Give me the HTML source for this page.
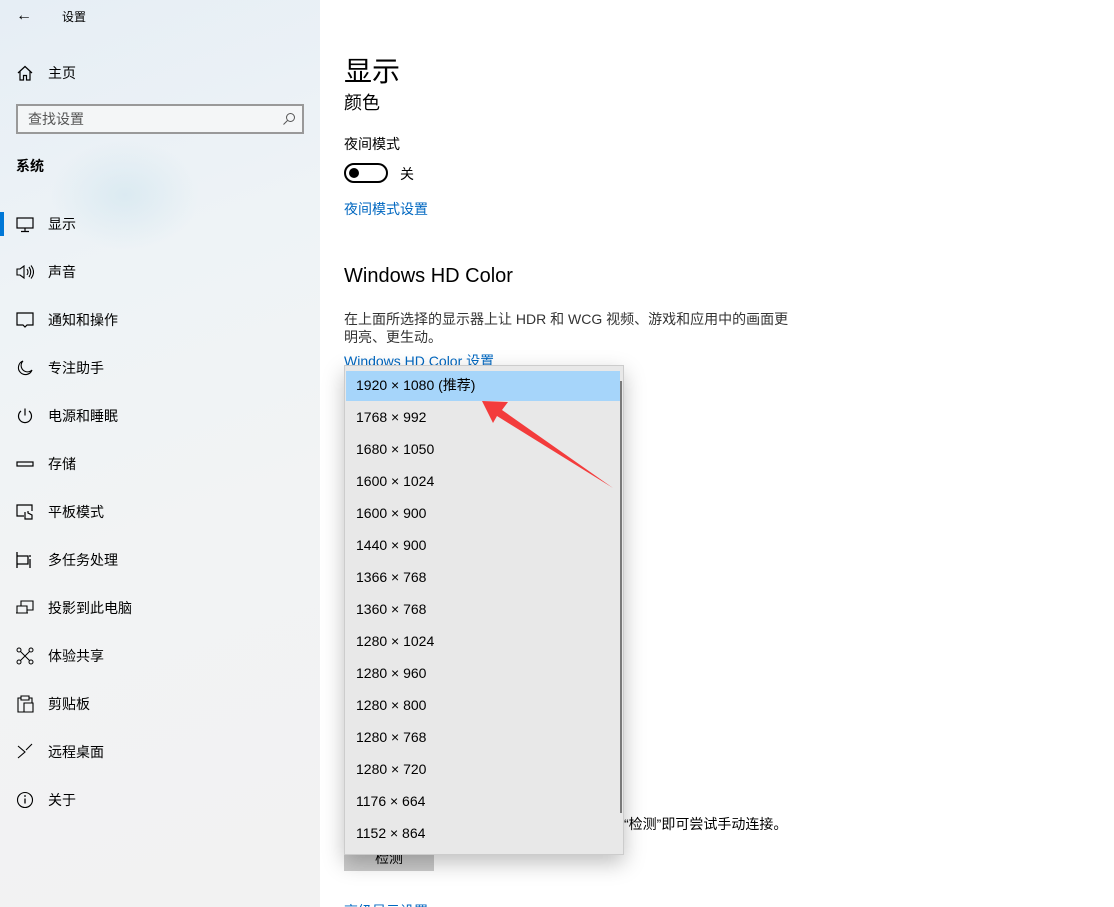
<!DOCTYPE html>
<html><head><meta charset="utf-8"><style>
*{margin:0;padding:0;box-sizing:border-box}
html,body{width:1114px;height:907px;overflow:hidden}
body{background:#fff;font-family:"Liberation Sans","Noto Sans CJK SC",sans-serif;color:#000;position:relative}
.side{position:absolute;left:0;top:0;width:320px;height:907px;background:linear-gradient(160deg,#e6eef5 0%,#eef3f6 30%,#f2f3f4 60%,#f2f2f2 100%)}
.glow{position:absolute;left:50px;top:140px;width:150px;height:110px;border-radius:50%;background:radial-gradient(ellipse,rgba(205,228,238,.55),rgba(220,236,242,0) 70%)}
.t{position:absolute;font-size:14px;line-height:20px;white-space:nowrap}
.ic{position:absolute;left:16px;width:18px;height:18px}
.item{position:absolute;left:48px;font-size:14px;line-height:20px}
.dd{position:absolute;left:344px;top:365px;width:280px;height:490px;background:#e8e8e8;border:1px solid #ccc;box-shadow:0 8px 20px rgba(0,0,0,.25)}
.op{position:absolute;left:11px;font-size:14px;line-height:20px}
.link{color:#0067c0}
</style></head><body>
<div class="side"><div class="glow"></div>
<div class="t" style="left:16px;top:6px;font-size:16px">←</div>
<div class="t" style="left:62px;top:7px;font-size:12px">设置</div>
<svg class="ic" style="top:64px" viewBox="0 0 18 18"><path d="M2 9L9 2.5 16 9M4 7.5V16h3.5v-4.5h3V16H14V7.5" fill="none" stroke="#000" stroke-width="1.2"/></svg>
<div class="item" style="top:63px">主页</div>
<div style="position:absolute;left:16px;top:104px;width:288px;height:30px;border:2px solid #999;background:#f4f6f7"></div>
<div class="t" style="left:28px;top:109px;color:#555">查找设置</div>
<svg style="position:absolute;left:282px;top:112px" width="14" height="14" viewBox="0 0 14 14"><circle cx="8.5" cy="5.5" r="4" fill="none" stroke="#555"/><path d="M5.5 8.5L1.5 12.5" stroke="#555"/></svg>
<div class="t" style="left:16px;top:156px;font-weight:bold">系统</div>
<div style="position:absolute;left:0;top:212px;width:4px;height:24px;background:#0078d7"></div>
<svg class="ic" style="top:216px" viewBox="0 0 18 18"><rect x="1" y="2" width="16" height="10" fill="none" stroke="#000" stroke-width="1.2"/><path d="M9 12v3M5 15.5h8" stroke="#000" stroke-width="1.2"/></svg>
<div class="item" style="top:214px">显示</div>
<svg class="ic" style="top:263px" viewBox="0 0 18 18"><path d="M1 6h3l4-3v12l-4-3H1z M11 6q2 3 0 6M13 4q3.5 5 0 10M15 2.5q5 6.5 0 13" fill="none" stroke="#000" stroke-width="1.1"/></svg>
<div class="item" style="top:262px">声音</div>
<svg class="ic" style="top:311px" viewBox="0 0 18 18"><path d="M1 2h16v12h-6l-2 2-2-2H1z" fill="none" stroke="#000" stroke-width="1.2"/></svg>
<div class="item" style="top:310px">通知和操作</div>
<svg class="ic" style="top:359px" viewBox="0 0 18 18"><path d="M7 2a7 7 0 1 0 9 9A6 6 0 0 1 7 2z" fill="none" stroke="#000" stroke-width="1.1"/></svg>
<div class="item" style="top:358px">专注助手</div>
<svg class="ic" style="top:407px" viewBox="0 0 18 18"><path d="M9 1.5v7M5 4a6.5 6.5 0 1 0 8 0" fill="none" stroke="#000" stroke-width="1.2"/></svg>
<div class="item" style="top:406px">电源和睡眠</div>
<svg class="ic" style="top:455px" viewBox="0 0 18 18"><rect x="1" y="7" width="16" height="4" fill="none" stroke="#000" stroke-width="1.2"/></svg>
<div class="item" style="top:454px">存储</div>
<svg class="ic" style="top:503px" viewBox="0 0 18 18"><path d="M8 13H1V2h15v6M9 9v7h7v-4l-4-2V8" fill="none" stroke="#000" stroke-width="1.2"/></svg>
<div class="item" style="top:502px">平板模式</div>
<svg class="ic" style="top:551px" viewBox="0 0 18 18"><path d="M1 1v16M1 5h11v8H1M14 4v2M14 8v9" fill="none" stroke="#000" stroke-width="1.3"/></svg>
<div class="item" style="top:550px">多任务处理</div>
<svg class="ic" style="top:599px" viewBox="0 0 18 18"><path d="M5 7V2h12v9h-6M1 7h10v7H1zM0 14h12" fill="none" stroke="#000" stroke-width="1.1"/></svg>
<div class="item" style="top:598px">投影到此电脑</div>
<svg class="ic" style="top:647px" viewBox="0 0 18 18"><circle cx="3" cy="3" r="2" fill="none" stroke="#000"/><circle cx="15" cy="3" r="2" fill="none" stroke="#000"/><circle cx="3" cy="15" r="2" fill="none" stroke="#000"/><circle cx="15" cy="15" r="2" fill="none" stroke="#000"/><path d="M4.5 4.5l9 9M13.5 4.5l-9 9" stroke="#000"/></svg>
<div class="item" style="top:646px">体验共享</div>
<svg class="ic" style="top:695px" viewBox="0 0 18 18"><path d="M5 3H2v14h6M13 3h3v5M5 1h8v4H5zM8 8h9v9H8z" fill="none" stroke="#000" stroke-width="1.1"/></svg>
<div class="item" style="top:694px">剪贴板</div>
<svg class="ic" style="top:743px" viewBox="0 0 18 18"><path d="M2 3l7 6-7 6M16 1l-6 6" fill="none" stroke="#000" stroke-width="1.1"/></svg>
<div class="item" style="top:742px">远程桌面</div>
<svg class="ic" style="top:791px" viewBox="0 0 18 18"><circle cx="9" cy="9" r="7.5" fill="none" stroke="#000" stroke-width="1.1"/><path d="M9 7.5v5" stroke="#000" stroke-width="1.3"/><circle cx="9" cy="5" r=".9"/></svg>
<div class="item" style="top:790px">关于</div>
</div>

<div class="t" style="left:344px;top:52px;font-size:28px;line-height:40px">显示</div>
<div class="t" style="left:344px;top:91px;font-size:18px;line-height:24px">颜色</div>
<div class="t" style="left:344px;top:134px">夜间模式</div>
<div style="position:absolute;left:344px;top:163px;width:44px;height:20px;border:2px solid #000;border-radius:10px"></div>
<div style="position:absolute;left:349px;top:168px;width:10px;height:10px;border-radius:50%;background:#000"></div>
<div class="t" style="left:400px;top:164px">关</div>
<div class="t link" style="left:344px;top:199px">夜间模式设置</div>
<div class="t" style="left:344px;top:263px;font-size:20px;line-height:26px">Windows HD Color</div>
<div class="t" style="left:344px;top:309px;color:#333">在上面所选择的显示器上让 HDR 和 WCG 视频、游戏和应用中的画面更</div>
<div class="t" style="left:344px;top:327px;color:#333">明亮、更生动。</div>
<div class="t link" style="left:344px;top:351px">Windows HD Color 设置</div>
<div class="t" style="left:624px;top:814px">“检测”即可尝试手动连接。</div>
<div style="position:absolute;left:344px;top:845px;width:90px;height:26px;background:#ccc"></div>
<div class="t" style="left:375px;top:848px">检测</div>
<div class="t link" style="left:344px;top:901px">高级显示设置</div>

<div class="dd">
<div style="position:absolute;left:1px;top:5px;width:274px;height:30px;background:#a6d5fa"></div>
<div style="position:absolute;left:275px;top:15px;width:2px;height:432px;background:#7a7a7a"></div>
<div class="op" style="top:9px">1920 × 1080 (推荐)</div>
<div class="op" style="top:41px">1768 × 992</div>
<div class="op" style="top:73px">1680 × 1050</div>
<div class="op" style="top:105px">1600 × 1024</div>
<div class="op" style="top:137px">1600 × 900</div>
<div class="op" style="top:169px">1440 × 900</div>
<div class="op" style="top:201px">1366 × 768</div>
<div class="op" style="top:233px">1360 × 768</div>
<div class="op" style="top:265px">1280 × 1024</div>
<div class="op" style="top:297px">1280 × 960</div>
<div class="op" style="top:329px">1280 × 800</div>
<div class="op" style="top:361px">1280 × 768</div>
<div class="op" style="top:393px">1280 × 720</div>
<div class="op" style="top:425px">1176 × 664</div>
<div class="op" style="top:457px">1152 × 864</div>
</div>
<svg style="position:absolute;left:0;top:0" width="1114" height="907"><path d="M482 401L508 402 502 410 613 488 497 416 493 423Z" fill="#f33c3c"/></svg>
</body></html>
